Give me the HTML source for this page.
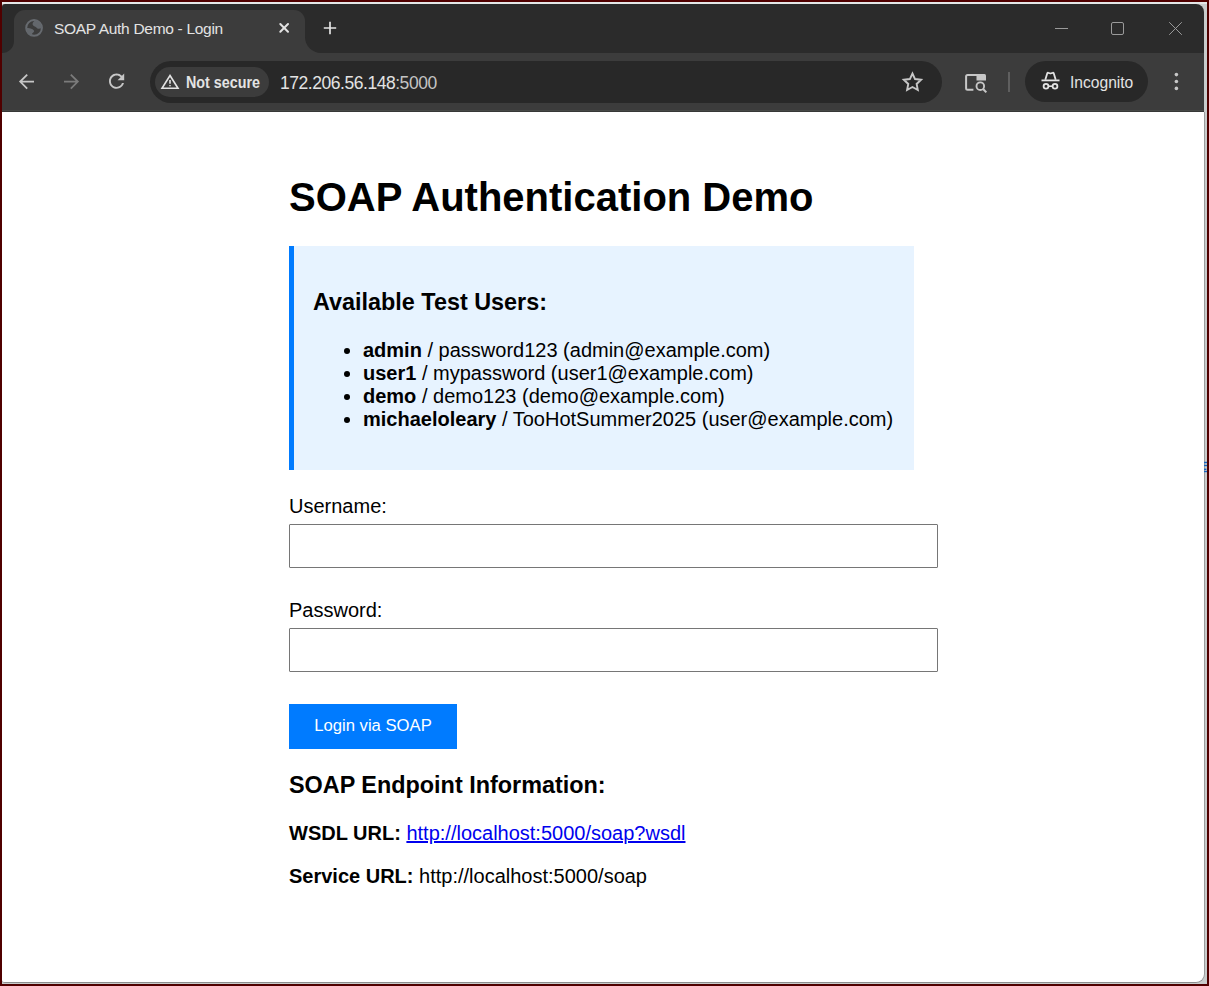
<!DOCTYPE html>
<html><head><meta charset="utf-8">
<style>
*{box-sizing:border-box;margin:0;padding:0}
html,body{width:1209px;height:986px;overflow:hidden;background:#500000;font-family:"Liberation Sans",sans-serif}
#frame{position:absolute;left:2px;top:2px;width:1205px;height:982px;background:#c8cccc}
#tabstrip{position:absolute;left:2px;top:4px;width:1202px;height:49px;background:#2b2b2b;border-top-right-radius:8px;border-top-left-radius:3px}
#toolbar{position:absolute;left:2px;top:53px;width:1202px;height:59px;background:#3c3c3c}
#tbline{position:absolute;left:2px;top:110px;width:1202px;height:1px;background:#464846}
#tbline2{position:absolute;left:2px;top:111px;width:1202px;height:1px;background:#373837}
#page{position:absolute;left:2px;top:112px;width:1203px;height:871px;background:#fff;border-right:1px solid #9a9c9c;border-bottom:1px solid #8c8e8e;border-bottom-right-radius:9px;border-bottom-left-radius:3px}
.tab{position:absolute;left:14px;top:10px;width:291px;height:43px;background:#3c3c3c;border-radius:11px 11px 0 0}
.flareL{position:absolute;left:2px;top:39px;width:12px;height:14px;background:#3c3c3c}
.flareL::after{content:"";position:absolute;left:0;top:0;width:12px;height:14px;background:#2b2b2b;border-bottom-right-radius:12px}
.flareR{position:absolute;left:305px;top:37px;width:16px;height:16px;background:#3c3c3c}
.flareR::after{content:"";position:absolute;left:0;top:0;width:16px;height:16px;background:#2b2b2b;border-bottom-left-radius:16px}
.tabtitle{position:absolute;left:54px;top:19.5px;font-size:15.5px;letter-spacing:-0.3px;color:#e3e3e3;white-space:nowrap}
.omni{position:absolute;left:150px;top:61px;width:792px;height:42px;background:#282828;border-radius:21px}
.ns{position:absolute;left:155px;top:67px;width:114px;height:30px;background:#3c3c3c;border-radius:15px}
.nstext{position:absolute;left:186px;top:73px;font-size:16.2px;transform:scaleX(0.885);transform-origin:0 0;font-weight:bold;color:#e3e3e3;white-space:nowrap}
.url{position:absolute;left:280px;top:72.8px;font-size:17.5px;letter-spacing:-0.46px;color:#e3e3e3;white-space:nowrap}
.url span{color:#c4c4c4}
.incog{position:absolute;left:1025px;top:61px;width:123px;height:41px;background:#282828;border-radius:21px}
.incogtext{position:absolute;left:1070px;top:73.5px;font-size:15.6px;color:#e3e3e3;white-space:nowrap}
.sep{position:absolute;left:1008px;top:72px;width:2px;height:20px;background:#5f5f5f}
svg.ic{position:absolute;left:0;top:0;overflow:visible}

h1{position:absolute;left:289px;top:174px;font-size:40px;font-weight:bold;white-space:nowrap;line-height:46px}
.box{position:absolute;left:289px;top:246px;width:625px;height:224px;background:#e7f3ff;border-left:5px solid #007bff}
.box h3{position:absolute;left:19px;top:43px;font-size:23.4px;font-weight:bold;white-space:nowrap}
.box ul{position:absolute;left:69px;top:93px;list-style:disc;font-size:20px;line-height:23px;white-space:nowrap}
.lbl{position:absolute;left:289px;font-size:20px;white-space:nowrap}
.inp{position:absolute;left:289px;width:649px;height:44px;border:1px solid #767676;border-radius:1px;background:#fff}
.btn{position:absolute;left:289px;top:704px;width:168px;height:45px;background:#007bff;color:#fff;font-size:16.67px;text-align:center;line-height:44px;white-space:nowrap}
h2{position:absolute;left:289px;top:772px;font-size:23.4px;font-weight:bold;white-space:nowrap}
.p{position:absolute;left:289px;font-size:20px;white-space:nowrap}
.p a{color:#0000ee;text-decoration:underline}
</style></head><body>
<div id="frame"></div>
<div id="tabstrip"></div>
<div id="toolbar"></div>
<div id="tbline"></div>
<div id="tbline2"></div>
<div id="page"></div>
<div class="flareL"></div>
<div class="flareR"></div>
<div class="tab"></div>
<div class="tabtitle">SOAP Auth Demo - Login</div>
<div class="omni"></div>
<div class="ns"></div>
<div class="nstext">Not secure</div>
<div class="url">172.206.56.148<span>:5000</span></div>
<div class="sep"></div>
<div class="incog"></div>
<div class="incogtext">Incognito</div>

<svg class="ic" width="1209" height="120" viewBox="0 0 1209 120">
 <!-- top white line -->
 <rect x="2" y="2" width="1205" height="2" fill="#e4e7e7"/>
 <!-- globe favicon -->
 <circle cx="34.05" cy="27.95" r="7.85" fill="none" stroke="#676b70" stroke-width="2"/>
 <path d="M35.2 20.3 C33.5 21.6 32.3 23 32.6 24.6 C32.9 26 34.5 26.3 35.8 26.9 C36.6 27.3 37 28.6 38.2 28.8 C39.4 29 40.6 28.5 41.8 28.3 L41.9 27 C41.4 23.4 38.7 20.8 35.2 20.3 Z" fill="#63676c"/>
 <path d="M26.2 28 C28.5 28.1 31.2 28.2 32.6 29.3 C33.8 30.2 34.6 31.1 33.8 32 C33 32.7 32.1 33 32.1 34 C32.1 35 32.5 35.6 32.8 36 C29 35.6 26.4 32.4 26.2 28 Z" fill="#63676c"/>
 <!-- tab close -->
 <path d="M280.3 24 L288 31.7 M288 24 L280.3 31.7" stroke="#e3e3e3" stroke-width="2" stroke-linecap="round"/>
 <!-- new tab plus -->
 <path d="M330 21.8 V34.2 M323.8 28 H336.2" stroke="#e3e3e3" stroke-width="1.7"/>
 <!-- window controls -->
 <path d="M1055 28.5 H1068" stroke="#9a9a9a" stroke-width="1"/>
 <rect x="1111.5" y="22.5" width="12" height="12" rx="1.5" fill="none" stroke="#9a9a9a" stroke-width="1"/>
 <path d="M1169.2 22.2 L1181.8 34.8 M1181.8 22.2 L1169.2 34.8" stroke="#9a9a9a" stroke-width="1"/>
 <!-- back -->
 <path d="M34 81.6 H20.5 M27.2 74.6 L20.2 81.6 L27.2 88.6" stroke="#c7c7c7" stroke-width="1.8" fill="none"/>
 <!-- forward -->
 <path d="M64 81.6 H77.5 M70.8 74.6 L77.8 81.6 L70.8 88.6" stroke="#7b7b7b" stroke-width="1.8" fill="none"/>
 <!-- reload -->
 <path transform="translate(105.2 69.8) scale(0.95)" d="M17.65 6.35A7.958 7.958 0 0 0 12 4c-4.42 0-7.99 3.58-7.99 8s3.57 8 7.99 8c3.73 0 6.84-2.55 7.73-6h-2.08A5.99 5.99 0 0 1 12 18c-3.31 0-6-2.690-6-6s2.690-6 6-6c1.660 0 3.140.690 4.220 1.780L13 11h7V4l-2.350 2.350z" fill="#c7c7c7"/>
 <!-- warning triangle -->
 <path d="M170 75.5 L178 88.2 H162 Z" stroke="#e3e3e3" stroke-width="1.6" fill="none" stroke-linejoin="miter"/>
 <rect x="169.2" y="80" width="1.6" height="3.7" fill="#e3e3e3"/>
 <rect x="169.2" y="85.1" width="1.6" height="1.2" fill="#e3e3e3"/>
 <!-- star -->
 <path d="M912.45 73.50 L915.04 79.04 L921.10 79.79 L916.63 83.96 L917.80 89.96 L912.45 87.00 L907.10 89.96 L908.27 83.96 L903.80 79.79 L909.86 79.04 Z" stroke="#c7c7c7" stroke-width="1.9" fill="none" stroke-linejoin="miter" stroke-miterlimit="2.4"/>
 <!-- tab search / lens -->
 <path d="M973.4 89.7 H967.6 Q966.1 89.7 966.1 88.2 V76.6 Q966.1 75.1 967.6 75.1 H977" stroke="#c7c7c7" stroke-width="2" fill="none"/>
 <path d="M976.5 74.1 H984.5 Q986 74.1 986 75.6 V80.6 H976.5 Z" fill="#c7c7c7"/>
 <circle cx="980.3" cy="86.2" r="3.8" stroke="#c7c7c7" stroke-width="1.9" fill="none"/>
 <path d="M983.1 89 L986.3 92.4" stroke="#c7c7c7" stroke-width="2.1"/>
 <!-- incognito -->
 <path d="M1045.3 79.8 L1047.2 73.4 Q1047.5 72.5 1048.3 72.9 L1050.5 73.5 L1052.7 72.9 Q1053.5 72.5 1053.8 73.4 L1055.7 79.8" stroke="#e3e3e3" stroke-width="1.8" fill="none" stroke-linejoin="round"/>
 <path d="M1041.5 80.4 H1059.5" stroke="#e3e3e3" stroke-width="1.8"/>
 <circle cx="1046" cy="86.2" r="2.4" stroke="#e3e3e3" stroke-width="1.8" fill="none"/>
 <circle cx="1055" cy="86.2" r="2.4" stroke="#e3e3e3" stroke-width="1.8" fill="none"/>
 <path d="M1048.4 86.2 H1052.6" stroke="#e3e3e3" stroke-width="1.6"/>
 <!-- menu dots -->
 <circle cx="1176.4" cy="74.6" r="1.8" fill="#c7c7c7"/>
 <circle cx="1176.4" cy="81.5" r="1.8" fill="#c7c7c7"/>
 <circle cx="1176.4" cy="88.4" r="1.8" fill="#c7c7c7"/>
</svg>
<!-- right edge lines -->

<h1>SOAP Authentication Demo</h1>
<div class="box">
<h3>Available Test Users:</h3>
<ul>
<li><b>admin</b> / password123 (admin@example.com)</li>
<li><b>user1</b> / mypassword (user1@example.com)</li>
<li><b>demo</b> / demo123 (demo@example.com)</li>
<li><b>michaeloleary</b> / TooHotSummer2025 (user@example.com)</li>
</ul>
</div>
<div class="lbl" style="top:495px">Username:</div>
<div class="inp" style="top:524px"></div>
<div class="lbl" style="top:599px">Password:</div>
<div class="inp" style="top:628px"></div>
<div class="btn">Login via SOAP</div>
<h2>SOAP Endpoint Information:</h2>
<div class="p" style="top:822px"><b>WSDL URL:</b> <a>http://localhost:5000/soap?wsdl</a></div>
<div class="p" style="top:865px"><b>Service URL:</b> http://localhost:5000/soap</div>
<svg style="position:absolute;left:0;top:0" width="1209" height="986"><g fill="#1565c0"><rect x="1204" y="461.8" width="3" height="1.4"/><rect x="1204" y="464.8" width="3" height="1.4"/><rect x="1204" y="468.6" width="2.4" height="1.4"/><rect x="1204" y="470.8" width="3" height="1.4"/></g></svg>
</body></html>
